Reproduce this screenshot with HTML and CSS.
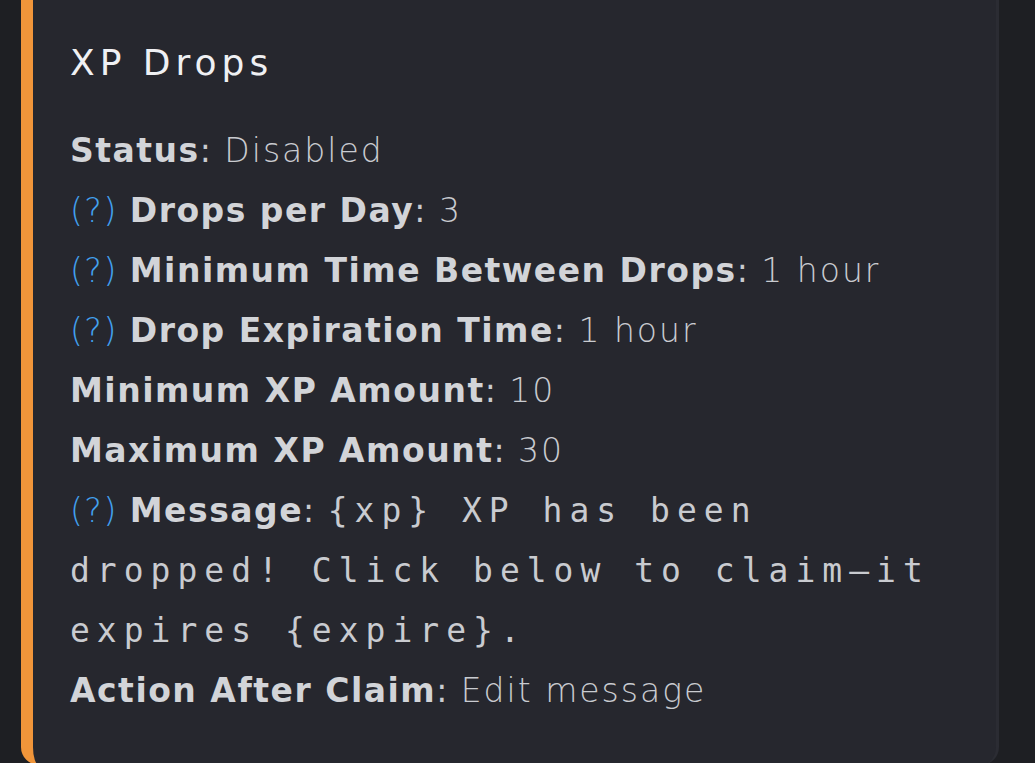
FILE: index.html
```html
<!DOCTYPE html>
<html>
<head>
<meta charset="utf-8">
<link rel="stylesheet" href="styles.css">
</head>
<body>
<div class="embed">
  <div class="title">XP Drops</div>
  <div class="fields">
    <div class="row"><b>Status</b>: <span class="val">Disabled</span></div>
    <div class="row"><span class="q">(?)</span> <b>Drops per Day</b>: <span class="val">3</span></div>
    <div class="row"><span class="q">(?)</span> <b>Minimum Time Between Drops</b>: <span class="val">1 hour</span></div>
    <div class="row"><span class="q">(?)</span> <b>Drop Expiration Time</b>: <span class="val">1 hour</span></div>
    <div class="row"><b>Minimum XP Amount</b>: <span class="val">10</span></div>
    <div class="row"><b>Maximum XP Amount</b>: <span class="val">30</span></div>
    <div class="row"><span class="q">(?)</span> <b>Message</b>: <code class="mono">{xp} XP has been dropped! Click below to claim—it expires {expire}.</code></div>
    <div class="row"><b>Action After Claim</b>: <span class="val">Edit message</span></div>
  </div>
</div>
</body>
</html>
```

FILE: styles.css
```css
html, body {
  margin: 0;
  padding: 0;
  background: #1e1f23;
  height: 763px;
  overflow: hidden;
}
body {
  font-family: "DejaVu Sans", "Noto Sans", sans-serif;
}
.embed {
  margin-left: 21px;
  width: 978px;
  box-sizing: border-box;
  background: #26272e;
  border-left: 12px solid #f0953a;
  border-right: 3px solid #2b2c33;
  border-radius: 0 0 18px 18px;
  padding: 43px 0 44px 37px;
}
.title {
  font-size: 36px;
  line-height: 40px;
  font-weight: 400;
  color: #eff0f3;
  margin-bottom: 38px;
  letter-spacing: 5px;
}
.fields {
  font-size: 33px;
  line-height: 60px;
  color: #c9cbd0;
  padding-right: 30px;
  letter-spacing: 1.5px;
}
.row b {
  font-weight: 700;
  color: #d2d4d8;
}
.val {
  font-weight: 300;
  letter-spacing: 2px;
}
.q {
  color: #42a0ee;
  font-weight: 300;
}
.mono {
  font-family: "DejaVu Sans Mono", "Liberation Mono", monospace;
  font-size: 33px;
  letter-spacing: 7px;
  color: #c9cbd0;
}
```
